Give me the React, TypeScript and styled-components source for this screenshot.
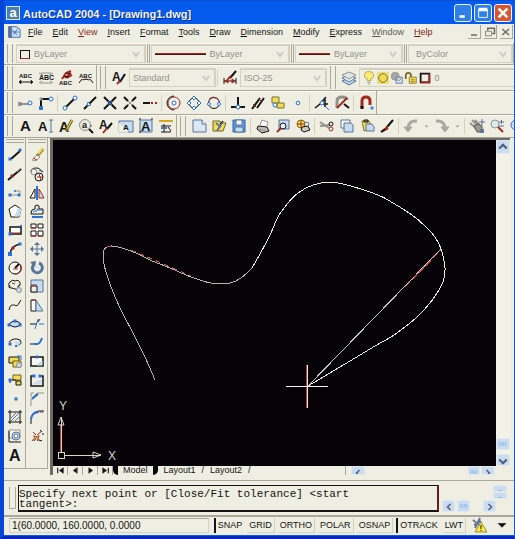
import React from "react";
import styled, { createGlobalStyle, css } from "styled-components";

const face = "#efeee2";
const shade = "#aca899";
const pale = "#d6d1bf";
const ink = "#141414";
const red = "#a32a20";
const blue = "#2c6fd6";
const steel = "#5a7398";
const gray = "#93928c";
const yellow = "#f2dc55";
const sky = "#c6dcf0";

const Global = createGlobalStyle`
  *, *::before, *::after { box-sizing: border-box; }
  body { margin: 0; background: ${face}; font-family: "Liberation Sans", Arial, sans-serif; font-size: 9px; color: ${ink}; }
  button, select { font: inherit; color: inherit; margin: 0; padding: 0; border: 0; background: none; }
  svg { display: block; }
`;

/* ---------- glyph data, drawn on a 16 x 16 grid ---------- */

type Stroke = [d: string, color: string, fill?: string, width?: number];
type Letter = { text: string; x: number; y: number; size: number; color: string };
type Shape = Stroke | Letter;

const ring = (x: number, y: number, r: number) =>
  `M${x - r} ${y}a${r} ${r} 0 1 0 ${2 * r} 0a${r} ${r} 0 1 0 ${-2 * r} 0`;
const dot = (x: number, y: number, s = 3) => `M${x - s / 2} ${y - s / 2}h${s}v${s}h${-s}z`;
const letter = (text: string, x: number, y: number, size: number, color = ink): Letter => ({ text, x, y, size, color });

const glyphs: Record<string, Shape[]> = {
  textSpread: [letter("ABC", 1, 8, 6), ["M1 12h14", ink, "none", 1], ["M1 12l2-2v4z M15 12l-2-2v4z", ink, ink, 0.5]],
  textFit: [["M1 3l4 2M15 3l-4 2M1 13l3-2M15 13l-3-2M3 3h10M2 13h12", gray], letter("ABC", 1, 10, 7)],
  textBrush: [["M4 9l4-6 5-2M7 8l6-5M9 8l5-3", red, "none", 2], ["M8 3l4 1M6 6l4 1", ink], letter("ABC", 1, 15, 6)],
  textArc: [letter("ABC", 1, 8, 6), ["M1 13l3-4M15 13l-3-4M5 10q3-2 6 0", ink], ["M3 10l2-1M11 9l2 1", red]],
  styleA: [letter("A", 1, 11, 12), ["M14 4l-5 8", ink, "none", 2], ["M9 11l-3 3", red, "none", 2]],
  dimStyle: [["M2 8v6M14 8v6M2 11h12", ink], ["M3 11l3-2v4zM13 11l-3-2v4z", red, red], ["M14 1l-6 7", ink, "none", 2], ["M9 6l-3 3", red, "none", 2]],
  layers: [["M1 11l7-3 7 3-7 4z", steel, sky], ["M1 8l7-3 7 3-7 4z", steel, "#e6eef4"], ["M1 5l7-3 7 3-7 4z", gray, "#dfe4e4"]],
  bulb: [["M8 1a4 4 0 0 1 2 8v2H6V9a4 4 0 0 1 2-8z", "#a59b50", "#fbee72"], ["M6 13h4M7 15h2", gray]],
  sun: [["M2 2h12v12H2z", "#e7d553", "#f8e97a"], [ring(8, 8, 5), "#6b6130", yellow]],
  frozen: [[ring(6, 6, 4.5), gray, "#a8a8a4"], ["M7 7h7v7H7z", steel, "#dfe8ee"], [ring(10, 9, 2), gray, sky]],
  lock: [["M2 9V5a3 3 0 0 1 6 0v2", "#77692a", "none", 2], ["M6 7h8v7H6z", "#8d7a23", yellow], ["M8 10h4M8 12h4", "#8d7a23"]],
  swatch: [["M3 3h10v10H3z", ink, face, 2], ["M13 3v10H3", red, "none", 2]],

  trackPoint: [["M1 9h10", gray, "none", 2], [dot(2, 9), gray, gray], [ring(12, 8, 2), blue, "#fff"]],
  fromPoint: [["M3 12V4h9", ink, "none", 2], [dot(3, 13), blue, blue], [dot(3, 4, 2), gray, gray], [ring(13, 4, 2), blue, "#fff"]],
  endpoint: [["M3 13L13 3", ink, "none", 2], [ring(3, 13, 2), blue, "#fff"], [ring(13, 3, 2), blue, "#fff"]],
  midpoint: [["M2 14L14 2", ink, "none", 2], ["M6 7l3 3-4 1z", blue, "#fff"]],
  intersect: [["M2 2l12 12M14 2L2 14", ink, "none", 2], ["M6 6l4 4M10 6l-4 4", blue]],
  apparent: [["M2 2l4 4M10 10l4 4M14 2l-4 4M6 10l-4 4", ink, "none", 2], ["M6 6l4 4M10 6l-4 4", gray]],
  extension: [["M1 8h7", ink, "none", 2], ["M9 8h2M13 8h2", red, "none", 2]],
  center: [[ring(8, 8, 6), red], [ring(8, 8, 2), blue, "#fff"], ["M8 1a7 7 0 0 0-7 7 7 7 0 0 0 7 7", ink]],
  quadrant: [[ring(8, 8, 5), ink], ["M8 1l2 2-2 2-2-2zM8 11l2 2-2 2-2-2zM3 6l2 2-2 2-2-2zM13 6l2 2-2 2-2-2z", blue, "#fff"]],
  tangent: [[ring(8, 8, 5.5), ink], ["M3 4l4-2 5 2", red], [ring(3, 9, 1.5), blue, "#fff"], [ring(13, 9, 1.5), blue, "#fff"]],
  perpendicular: [["M1 12h14M8 2v10", ink, "none", 2], [ring(8, 12, 2), blue, "#fff"]],
  parallel: [["M2 14L10 3M7 13l7-10", ink, "none", 2], ["M3 9l3 3M9 4l3 3", red]],
  insertSnap: [["M2 2h7v6H2z", "#7c7126", yellow], ["M7 8h7v5H7z", "#7c7126", yellow], [ring(5, 10, 2), blue, "#fff"]],
  nodeSnap: [[ring(8, 8, 1.8), blue, "#fff"]],
  nearest: [["M1 13l5-4 6-7M6 9h8M11 4v8", ink, "none", 1.5], [ring(8, 8, 2), blue, "#fff"], ["M12 12l3 3", blue]],
  noSnap: [["M3 13V6q0-4 5-4t5 3", gray, "none", 3], ["M13 3L3 13", red, "none", 2], ["M10 9l5 4", ink, "none", 2]],
  magnet: [["M4 13V6q0-4 4-4t4 4v4", red, "none", 3], ["M4 11v3", ink, "none", 3], ["M13 12h2v2h-2z", blue, sky]],

  textA: [letter("A", 2, 13, 15)],
  textCursor: [letter("A", 0, 13, 13), ["M13 2v12M11 2h4M11 14h4", steel]],
  textEdit: [letter("A", 1, 14, 14), ["M14 2L8 13", "#7c6a20", "none", 3], ["M14 2L9 11", yellow]],
  findText: [[ring(7, 7, 5.5), gray, "#e8e8e0"], letter("a", 4, 10, 9), ["M11 11l4 4", ink, "none", 2], ["M12 8h2", red]],
  stylePen: [letter("A", 1, 11, 12), ["M14 5l-5 6", ink, "none", 2], ["M9 10l-4 5", red, "none", 2]],
  scaleText: [["M1 3h14v11H1z", steel, sky, 1], ["M1 14V5l9 9z", face, face], letter("A", 5, 12, 8)],
  justify: [["M2 2h12v12H2z", steel, sky], ["M1 1h2M13 1h2M1 14h2", ink], letter("A", 3, 13, 13)],
  spaceText: [["M1 3h14", "#d2a61d", "none", 2], ["M6 6v8M3 8h10M3 14h10M10 9l3 4", ink], ["M3 10h6", steel, "none", 2]],

  sheet: [["M2 2h9l4 4v8H2z", steel, "#dce7f4"], ["M11 2v4h4", steel, "#fff"]],
  open: [["M2 3h7l1 2h5l-3 8H2z", "#6e6427", yellow], ["M5 5l5 4M12 3l-6 10", steel, "none", 2], ["M9 6l3-3", ink]],
  save: [["M2 2h12v12H2z", "#2d62a8", "#5f98dc"], ["M5 2h6v5H5z", steel, "#fff"], ["M4 9h8v5H4z", steel, sky]],
  print: [["M5 7l2-5 6 2-1 4", gray, "#fff"], ["M3 8l9 1 2 4-7 2-5-4z", ink, "#bcbcb6"], ["M4 11l7 2", gray]],
  preview: [["M4 2h10v9H4z", steel, sky], [ring(8, 8, 3), ink, "#e6eef4"], ["M6 10l-4 4", red, "none", 2]],
  publish: [[ring(6, 6, 4), "#8a6c16", yellow], ["M6 2v8M2 6h8", red], ["M7 9l6-1 2 4-6 2-3-2z", ink, "#c8c8c0"], ["M10 4l4 1-1 3", steel, "#fff"]],
  cut: [["M1 4l9 6M1 8l10-1", gray, "none", 2], [ring(12, 6, 2), ink], [ring(12, 11, 2), red]],
  copyClip: [["M2 2h9v8H2z", steel, "#fff"], ["M5 5h7l2 2v7H5z", steel, sky]],
  paste: [["M3 3h7l3 7-8 3z", "#8a741f", yellow], ["M5 2h4v2H5z", ink, gray], ["M7 6h6l2 3v4H7z", steel, sky]],
  match: [["M14 2L8 9", ink, "none", 2], ["M8 8l-5 6 6-3z", red, red], ["M2 14l4-3", ink, "none", 2]],
  undo: [["M14 3Q6 2 5 10", "#a9a8a2", "none", 3], ["M1 9h8l-4 5z", "#a9a8a2", "#a9a8a2"]],
  redo: [["M2 3q8-1 9 7", "#a9a8a2", "none", 3], ["M7 9h8l-4 5z", "#a9a8a2", "#a9a8a2"]],
  drop: [["M6 7h4l-2 2z", gray, gray, 0.5]],
  pan: [["M3 2l7 7M1 5l8 7M6 2l6 7", gray, "none", 2], ["M5 8l3 6h5V8l-4-2z", "#55554f", "#9a9a92"], ["M13 1v6M10 4h6", steel], [dot(13, 13), steel, steel]],
  zoomRt: [[ring(6, 6, 4), gray, "#dceaf2"], ["M9 9l5 5", red, "none", 2], ["M10 4h5M12.5 2v4M10 8h5", steel]],
  zoomWin: [[ring(7, 7, 5), steel, sky], ["M10 10l4 4", ink, "none", 2]],

  line: [["M4 12l9-8", ink, "none", 2], [dot(3, 12), blue, blue, 0], [dot(13, 3, 2), blue, blue]],
  xline: [["M1 14L14 3", ink, "none", 2], [dot(5, 10), red, red, 0], ["M10 6l4-4", gray]],
  pline: [["M4 10h7q3-1 2-4H9", gray], [dot(3, 10), blue, blue, 0], [dot(8, 6, 1), blue, blue], [dot(12, 10, 2), blue, blue]],
  polygon: [["M8 2l6 4-2 8H4L2 6z", ink, "#fff"], ["M11 6l3 0-2 7h-4z", sky, sky]],
  rectangle: [["M3 5h11v7H3z", ink, "#fff", 1.5], ["M4 11h9", red], [dot(3, 12), blue, blue, 0], [dot(14, 4, 2), blue, blue, 0]],
  arc: [["M3 13Q4 5 13 3", ink, "none", 1.5], [dot(3, 13, 4), blue, blue, 0], [dot(6, 7), red, red, 0], [dot(13, 3), blue, blue, 0]],
  circle: [[ring(8, 8, 6), ink, "#f7f7ef"], ["M8 8l4-4", ink, "none", 2], ["M6 9h5", red], ["M13 4a6 6 0 0 1-5 10", red]],
  cloud: [["M3 9Q0 6 3 4q2-3 5-1 4-2 5 2 1 3-2 3 1 4-3 3l-3-1q-5 0-2-3", ink], [ring(12, 12, 2.5), gray, sky], ["M5 5l3 1", red]],
  spline: [["M2 13q1-6 5-5 4 2 5-2l2-3", ink], ["M5 8h3", gray]],
  ellipse: [["M2 8q6-6 12 0-6 6-12 0z", ink, sky], [dot(2, 9), blue, blue, 0], [dot(8, 5), blue, blue, 0], [dot(13, 9), blue, blue, 0]],
  ellipseArc: [["M2 8q5-5 11-2 3 4-3 6", ink], [dot(3, 10), blue, blue, 0], ["M8 8h5l-2 4z", sky, sky], [dot(9, 12, 2), blue, blue, 0]],
  insertBlock: [["M2 4h10v6H2z", ink, yellow], ["M6 8h8v6H6z", "#6b6222", yellow], ["M10 3h4v4", blue], [ring(12, 12, 2.5), gray, sky]],
  makeBlock: [["M6 3h8v5H6z", "#6b6222", yellow], ["M9 9h5v4H9z", ink, yellow], ["M3 8h6M3 8v3", ink], [dot(3, 8), blue, blue, 0]],
  point: [[dot(9, 8, 3), blue, blue, 0]],
  hatch: [["M1 3h14M1 13h14M3 1v14M13 1v14", ink], ["M4 9l5-5M4 12l8-8M8 12l4-4", steel]],
  region: [["M2 2h11v8H2z", gray, "#f8f8f2"], [ring(9, 8, 4), steel, sky], ["M2 3v11h12", ink], [ring(9, 8, 2), steel, "#fff"]],
  mtext: [letter("A", 2, 14, 16)],

  erase: [["M14 2L8 9", "#8b6e1e", "none", 3], ["M14 1L9 7", yellow, "none", 2], ["M8 8l-5 5 4 1 4-4z", gray, "#f6f6f0"], ["M4 11l4 2", red]],
  copy: [["M2 6q0-4 5-4 5 0 4 3", ink], [ring(5, 6, 3), gray], [ring(10, 11, 4), ink], ["M8 11h6M10 8l2 6", red], ["M11 4l3 2", steel, "none", 2]],
  mirror: [["M6 4v9H1z", ink, "#fff"], ["M10 4v9h5z", red, sky], ["M8 1v14", blue, "none", 2]],
  offset: [["M2 10q0-4 4-4-1-4 2-4t2 4h4v5H2z", ink], ["M4 9q1-1 4-1 0-4 1-1h4", blue], ["M3 14h11", blue, "none", 2]],
  array: [["M2 2h5v4H2zM9 2h5v4H9zM2 9h5v5H2zM9 9h5v5H9z", ink, "#fff", 1], ["M2 6h5M9 14h5M2 14h5", red]],
  move: [["M8 2v12M2 8h12", steel], ["M8 1l3 3H5zM8 15l3-3H5zM1 8l3-3v6zM15 8l-3-3v6z", steel, steel, 0]],
  rotate: [["M10 3a5 5 0 1 1-5 1", steel, "none", 3], ["M1 2l6-1-1 6z", steel, steel, 0], [ring(8, 9, 2), sky, "#f8f8f2"]],
  scale: [["M2 2h12v12H2z", steel, sky], ["M2 8h6v6H2z", ink, face], ["M2 7h6", red]],
  stretch: [["M2 3h5v11H2z", ink, "#fff"], ["M7 3l7 11H7z", steel, sky], ["M3 3h3", red]],
  trim: [["M1 8h7", ink, "none", 1], ["M10 8h5", blue], ["M9 3L6 13", blue, "none", 1], ["M11 3l-2 3", ink]],
  extend: [["M1 10h8", ink, "none", 1], ["M5 10h3q3 0 5-6", blue, "none", 2]],
  breakAt: [["M2 4h12v9H2z", ink, "#f8f8f2", 1.5], ["M7 4h2", blue, "none", 3], ["M8 12l5-4v4z", sky, sky]],
  breakTwo: [["M6 4H2v10h12V4h-4", ink, "none", 1.5], [dot(5, 4), blue, blue, 0], [dot(11, 4), blue, blue, 0], ["M4 12h8V8z", sky, sky]],
  chamfer: [["M2 15V8l6-6h7", gray], ["M3 8l6-5", blue, "none", 2], ["M2 2h3M2 2v4", gray]],
  fillet: [["M2 15V9q1-6 8-7h5", ink], ["M2 10q1-7 8-7", blue, "none", 2], ["M11 3h3", red]],
  explode: [["M3 13l4-5 2 5 1-6M8 7l5-4M4 8l5 1M4 4l3 3", red], ["M11 2l2 2M13 6h2M5 13l3-4M10 12l3 1", ink], ["M6 9l3 2", "#dca73a", "none", 2]],

  drawing: [["M2 2h9l4 3v9H2z", "#2d62a8", "#dce7f4"], ["M2 2h3v12H2z", steel, steel], ["M6 5l6 7M12 4l-5 8M5 8h9", blue]],
  left: [["M10 4L6 8l4 4", "#4d6280", "none", 2]],
  right: [["M6 4l4 4-4 4", "#4d6280", "none", 2]],
  up: [["M3 10l5-5 5 5", "#4d6280", "none", 3]],
  down: [["M3 6l5 5 5-5", "#4d6280", "none", 3]],
  tiny: [["M6 8h4", steel, "none", 2]],
  thumb: [["M3 5v6M6 5v6M9 5v6M12 5v6", "#69a7e4"]],
  first: [["M3 3v10", ink, "none", 2], ["M13 3v10L6 8z", ink, ink]],
  prev: [["M11 3v10L4 8z", ink, ink], ["M10 4v8", red]],
  next: [["M5 3v10l7-5z", ink, ink]],
  last: [["M13 3v10", ink, "none", 2], ["M3 3v10l7-5z", ink, ink]],
  minimize: [["M4 12h6", "#fff", "none", 3]],
  maximize: [["M3 4h10v9H3z", "#fff"], ["M3 4h10", "#fff", "none", 4]],
  close: [["M3 3l10 10M13 3L3 13", "#fff", "none", 3]],
  docMin: [["M4 12h8", "#6d6b62", "none", 2]],
  docRestore: [["M5 6V3h9v7h-3", "#6d6b62", "none", 2], ["M2 7h8v6H2z", "#6d6b62"]],
  docClose: [["M3 4l9 8M12 4l-9 8", "#6d6b62", "none", 2]],
  tray: [["M2 3l6 5M9 1L4 11M3 8l7-4", steel, "none", 2], ["M3 4l4 4", gray, sky], ["M10 5l6 10H4z", "#a08b21", "#ffe84a"], ["M10 8v4M10 13v1", ink]],
  caret: [["M3 6h10l-5 5z", ink, ink]],
};

const Glyph = ({ name, size = 16 }: { name: string; size?: number }) => (
  <svg width={size} height={size} viewBox="0 0 16 16" aria-hidden="true">
    {glyphs[name].map((s, i) =>
      Array.isArray(s) ? (
        <path key={i} d={s[0]} stroke={s[1]} fill={s[2] ?? "none"} strokeWidth={s[3] ?? 1} />
      ) : (
        <text key={i} x={s.x} y={s.y} fontSize={s.size} fill={s.color} fontWeight="bold">{s.text}</text>
      )
    )}
  </svg>
);

/* ---------- window frame ---------- */

const Frame = styled.div`
  min-height: 100vh;
  display: flex;
  flex-direction: column;
  overflow: hidden;
  background: ${face};
  border-left: 4px solid #0646d6;
  border-right: 1px solid #0a5cf0;
  border-bottom: 3px solid #0628bd;
`;

const TitleBar = styled.header`
  display: flex;
  align-items: center;
  gap: 2px;
  height: 24px;
  padding: 0 2px;
  background: #055aee;
  border-top: 1px solid #0b4fd0;
`;

const Logo = styled.span`
  display: grid;
  place-items: center;
  width: 14px;
  height: 14px;
  margin-right: 1px;
  background: #4d7fae;
  border: 1px solid #dfe9f2;
  color: #fff;
  font-size: 13px;
  line-height: 10px;
  font-weight: bold;
`;

const Title = styled.h1`
  flex: 1;
  margin: 3px 0 0;
  color: #f4f4ee;
  font-size: 11px;
  line-height: 14px;
  font-weight: bold;
  text-shadow: 1px 1px 0 #0a2f92;
`;

const CaptionButton = styled.button<{ $danger?: boolean }>`
  display: grid;
  place-items: center;
  width: 18px;
  height: 18px;
  border: 1px solid #eef4ff;
  border-radius: 3px;
  background: ${(p) => (p.$danger ? "#d9572f" : "#2f80e6")};
`;

const MenuBar = styled.nav`
  display: flex;
  align-items: center;
  gap: 7px;
  height: 19px;
  padding: 0 1px 3px 3px;
`;

const MenuList = styled.div`
  display: flex;
  gap: 10px;
`;

const MenuItem = styled.button<{ $tone?: string }>`
  line-height: 12px;
  color: ${(p) => p.$tone ?? ink};
  &::first-letter { text-decoration: underline; }
`;

const DocButtons = styled.div`
  display: flex;
  gap: 3px;
  margin-left: auto;
`;

const DocButton = styled.button`
  display: grid;
  place-items: center;
  width: 13px;
  height: 14px;
  border: solid ${shade};
  border-width: 0 1px 1px 0;
`;

/* ---------- toolbars ---------- */

const Band = styled.div<{ $height: number }>`
  display: flex;
  flex: none;
  height: ${(p) => p.$height}px;
  overflow: hidden;
  border-bottom: 1px solid ${shade};
  box-shadow: inset 0 1px 0 #fbfaf3;
`;

const Group = styled.div<{ $grow?: number; $end?: boolean }>`
  display: flex;
  align-items: center;
  flex: ${(p) => (p.$grow ? `${p.$grow} 1 0` : "none")};
  min-width: 0;
  ${(p) => p.$end && css`border-right: 1px solid ${shade};`}
`;

const Grip = styled.span<{ $slim?: boolean }>`
  flex: none;
  align-self: stretch;
  width: ${(p) => (p.$slim ? 3 : 6)}px;
  margin: 1px ${(p) => (p.$slim ? 1 : 3)}px;
  border: solid ${shade};
  border-width: 0 1px;
`;

const Rule = styled.span`
  flex: none;
  width: 1px;
  height: 16px;
  margin: 0 2px 0 1px;
  background: ${pale};
`;

const Tool = styled.button<{ $width?: number }>`
  display: grid;
  place-items: center;
  flex: none;
  width: ${(p) => p.$width ?? 20}px;
  height: 18px;
`;

const Combo = styled.label<{ $width?: number; $inset?: boolean }>`
  display: flex;
  align-items: center;
  gap: 4px;
  flex: ${(p) => (p.$width ? "none" : "1")};
  width: ${(p) => (p.$width ? `${p.$width}px` : "auto")};
  height: 19px;
  min-width: 0;
  padding: 0 4px 0 ${(p) => (p.$inset ? 7 : 3)}px;
  border: solid ${pale};
  border-width: 2px 2px 1px 1px;
  color: ${gray};
`;

const Choice = styled.select`
  appearance: none;
  flex: 1;
  min-width: 0;
  outline: none;
`;

const Chevron = () => (
  <svg width="8" height="8" viewBox="0 0 8 8" aria-hidden="true">
    <path d="M1 2l3 4 3-4" fill="none" stroke="#c9cdc6" strokeWidth="2" />
  </svg>
);

const Swatch = styled.span`
  width: 10px;
  height: 9px;
  border: 1px solid ${ink};
  border-bottom-color: ${red};
`;

const LineSample = styled.span<{ $width: number }>`
  flex: none;
  width: ${(p) => p.$width}px;
  height: 2px;
  background: ${red};
  border-bottom: 1px solid #4a1512;
`;

const LayerState = styled.div`
  display: flex;
  align-items: center;
  flex: 1;
  height: 19px;
  padding-left: 2px;
  border: solid ${pale};
  border-width: 2px 0 1px 1px;
  color: ${gray};
`;

const Tools = ({ names, width }: { names: string[]; width?: number }) => (
  <>
    {names.map((n, i) =>
      n === "|" ? <Rule key={i} /> : (
        <Tool key={i} aria-label={n} $width={n === "drop" ? 11 : width}>
          <Glyph name={n} size={width ?? (n === "drop" ? 11 : 16)} />
        </Tool>
      )
    )}
  </>
);

/* ---------- work area ---------- */

const Work = styled.main`
  display: flex;
  flex: 1;
  min-height: 0;
`;

const Rail = styled.div`
  display: flex;
  flex-direction: column;
  flex: none;
  width: 22px;
  border-right: 1px solid ${shade};
  border-bottom: 1px solid ${shade};
  margin-bottom: 6px;
  padding-bottom: 4px;
`;

const RailGrip = styled.span`
  height: 4px;
  margin: 1px 1px 3px 2px;
  border: solid ${shade};
  border-width: 1px 0;
`;

const RailTools = styled.div`
  display: grid;
  flex: 1;
  grid-template-rows: repeat(17, minmax(0, 1fr));
  justify-items: center;
  align-items: center;
`;

const RailTool = styled.button`
  display: grid;
  place-items: center;
  width: 20px;
  height: 18px;
`;

const View = styled.section`
  display: grid;
  flex: 1;
  min-width: 0;
  grid-template-columns: minmax(0, 1fr) 14px;
  grid-template-rows: minmax(0, 1fr) 9px;
  margin: 0 4px 0 2px;
  border: solid #6d6c64;
  border-width: 2px 0 0 3px;
`;

const Sheet = styled.div`
  min-height: 0;
  background: #050307;
  overflow: hidden;
  svg { width: 100%; height: 100%; }
`;

const VScroll = styled.div`
  display: flex;
  flex-direction: column;
  background: #f3f2e9;
`;

const Thumb = styled.div`
  margin-bottom: 4px;
`;

const ScrollButton = styled.button<{ $w: number; $h: number }>`
  display: grid;
  place-items: center;
  flex: none;
  overflow: hidden;
  width: ${(p) => p.$w}px;
  height: ${(p) => p.$h}px;
  background: #cbdcee;
  border: 1px solid #dfe9f2;
  border-radius: 2px;
`;

const Spacer = styled.span`
  flex: 1;
`;

const TabRow = styled.div`
  display: flex;
  align-items: center;
  height: 9px;
  line-height: 9px;
`;

const NavButton = styled.button`
  display: grid;
  place-items: center;
  flex: none;
  width: 15px;
  height: 9px;
  border-right: 1px solid ${shade};
`;

const Tab = styled.button<{ $active?: boolean }>`
  flex: none;
  padding: 0 6px;
  line-height: 9px;
  ${(p) => p.$active && css`
    padding: 0 5px;
    border: solid #050307;
    border-width: 0 5px;
    border-radius: 0 0 5px 5px;
  `}
`;

const HScroll = styled.div`
  display: flex;
  gap: 1px;
  flex: none;
  width: 34%;
  margin-left: auto;
  padding: 0 1px 0 5px;
  border-left: 1px solid ${shade};
`;

/* ---------- command line and status ---------- */

const CommandArea = styled.section`
  display: flex;
  flex: none;
  margin-top: 5px;
  padding: 4px 3px 4px 5px;
  border-top: 1px solid ${shade};
  border-bottom: 2px solid ${shade};
  height: 37px;
`;

const CommandGrip = styled.span`
  flex: none;
  width: 7px;
  height: 22px;
  margin: 2px 2px 0 0;
  border: solid ${shade};
  border-width: 0 1px 1px 1px;
`;

const CommandText = styled.textarea`
  flex: 1;
  min-width: 0;
  height: 27px;
  margin: 0;
  padding: 3px 0 0;
  resize: none;
  overflow: hidden;
  outline: none;
  background: ${face};
  color: ${ink};
  border: 1px solid ${ink};
  border-right: 2px solid #6d201b;
  border-bottom-width: 2px;
  font-family: "Liberation Mono", "Courier New", monospace;
  font-size: 11px;
  line-height: 10px;
`;

const CommandScroll = styled.div`
  display: flex;
  flex-direction: column;
  align-items: flex-end;
  flex: none;
  width: 72px;
  padding: 0 4px 0 3px;
`;

const ScrollLine = styled.div`
  display: flex;
  gap: 2px;
  width: 100%;
  margin-top: 1px;
`;

const StatusBar = styled.footer`
  display: flex;
  align-items: center;
  flex: none;
  gap: 3px;
  height: 19px;
  padding: 0 2px 2px 5px;
  border-bottom: 1px solid #0a5cf0;
  line-height: 14px;
`;

const Coordinates = styled.output`
  flex: 1;
  min-width: 0;
  height: 15px;
  margin-right: 2px;
  padding-left: 2px;
  border: 1px solid ${pale};
  border-top-color: ${shade};
  font-size: 10px;
  white-space: nowrap;
`;

const Toggle = styled.button<{ $on?: boolean }>`
  flex: none;
  height: 15px;
  padding: 0 2px;
  border: solid ${pale};
  border-width: 0 1px 1px 0;
  ${(p) => p.$on && css`border-color: ${ink} ${pale} ${pale} ${ink}; border-width: 0 0 0 2px;`}
`;

/* ---------- drawing ---------- */

const curvePoints: [number, number][] = [
  [155, 380], [145, 357], [133, 333], [120, 308], [110, 284], [104, 264], [104, 250], [112, 246],
  [131, 251], [150, 260], [170, 268], [191, 277], [211, 283], [230, 283], [241, 278], [252, 268],
  [260, 254], [270, 235], [278, 217], [288, 203], [298, 193], [313, 185], [330, 182], [347, 185],
  [378, 195], [393, 203], [412, 215], [425, 226], [435, 237], [441, 249], [445, 268], [443, 282],
  [437, 293], [430, 303], [416, 318], [394, 335], [375, 346], [345, 364], [308, 386],
];

/* Catmull-Rom spline through the points, written as cubic segments. */
const smooth = (pts: [number, number][]) =>
  pts.slice(1).reduce((d, p, i) => {
    const a = pts[Math.max(0, i - 1)];
    const b = pts[i];
    const n = pts[Math.min(pts.length - 1, i + 2)];
    return `${d}C${b[0] + (p[0] - a[0]) / 6} ${b[1] + (p[1] - a[1]) / 6} ${p[0] - (n[0] - b[0]) / 6} ${p[1] - (n[1] - b[1]) / 6} ${p[0]} ${p[1]}`;
  }, `M${pts[0][0]} ${pts[0][1]}`);

const Drawing = () => (
  <svg viewBox="53 140 443 326" preserveAspectRatio="xMinYMin meet" fill="none" role="img" aria-label="Spline">
    <g shapeRendering="crispEdges">
      <path d={smooth(curvePoints.slice(0, 16))} stroke="#b5b4a8" />
      <path d={smooth(curvePoints.slice(15))} stroke="#ecebdf" />
      <path d="M107 247L112 246M131 250L191 276" stroke="#b4574c" strokeDasharray="5 4" />
      <path d="M308 386L441 249" stroke="#c4c8cc" />
      <path d="M405 287L441 250" stroke="#d0453a" strokeDasharray="7 3" />
      <path d="M306.5 365v43" stroke="#d0342b" />
      <path d="M307.5 365v43M286 386.5h42" stroke="#f4f2e8" />
      <path d="M60.5 452V424" stroke="#c9392f" />
      <path d="M61.5 452V417M65 455.5h36" stroke="#d9d7ca" />
      <path d="M58.5 452.5h6v6h-6z" stroke="#d9d7ca" />
    </g>
    <path d="M58 425l3-8 3 8zM93 452l8 3-8 3z" stroke="#d9d7ca" />
    <g fill="#d5d4c8" fontSize="12" fontFamily="Liberation Sans, Arial, sans-serif">
      <text x="59" y="410">Y</text>
      <text x="108" y="460">X</text>
    </g>
  </svg>
);

const menus: [string, string?][] = [
  ["File"], ["Edit"], ["View", "#8b1c18"], ["Insert"], ["Format"], ["Tools"], ["Draw"], ["Dimension"],
  ["Modify"], ["Express"], ["Window", "#5d5c56"], ["Help", "#7d1a16"],
];

const drawTools = ["line", "xline", "pline", "polygon", "rectangle", "arc", "circle", "cloud", "spline", "ellipse", "ellipseArc", "insertBlock", "makeBlock", "point", "hatch", "region", "mtext"];
const modifyTools = ["erase", "copy", "mirror", "offset", "array", "move", "rotate", "scale", "stretch", "trim", "extend", "breakAt", "breakTwo", "chamfer", "fillet", "explode"];
const modes: [string, boolean][] = [["SNAP", true], ["GRID", false], ["ORTHO", false], ["POLAR", false], ["OSNAP", false], ["OTRACK", true], ["LWT", false]];

const ToolRail = ({ names }: { names: string[] }) => (
  <Rail>
    <RailGrip />
    <RailTools>
      {names.map((n) => <RailTool key={n} aria-label={n}><Glyph name={n} /></RailTool>)}
    </RailTools>
  </Rail>
);

export default function App() {
  return (
    <>
      <Global />
      <Frame>
        <TitleBar>
          <Logo>a</Logo>
          <Title>AutoCAD 2004 - [Drawing1.dwg]</Title>
          <CaptionButton aria-label="Minimize"><Glyph name="minimize" size={14} /></CaptionButton>
          <CaptionButton aria-label="Maximize"><Glyph name="maximize" size={14} /></CaptionButton>
          <CaptionButton aria-label="Close" $danger><Glyph name="close" size={14} /></CaptionButton>
        </TitleBar>
        <MenuBar>
          <Glyph name="drawing" size={14} />
          <MenuList>
            {menus.map(([label, tone]) => <MenuItem key={label} $tone={tone}>{label}</MenuItem>)}
          </MenuList>
          <DocButtons>
            <DocButton aria-label="Minimize drawing"><Glyph name="docMin" size={12} /></DocButton>
            <DocButton aria-label="Restore drawing"><Glyph name="docRestore" size={12} /></DocButton>
            <DocButton aria-label="Close drawing"><Glyph name="docClose" size={12} /></DocButton>
          </DocButtons>
        </MenuBar>

        <Band $height={22}>
          <Group $grow={139}>
            <Grip />
            <Combo><Swatch /><Choice aria-label="Color"><option>ByLayer</option></Choice><Chevron /></Combo>
          </Group>
          <Group $grow={142}>
            <Grip $slim />
            <Combo><LineSample $width={51} /><Choice aria-label="Linetype"><option>ByLayer</option></Choice><Chevron /></Combo>
          </Group>
          <Group $grow={111}>
            <Grip $slim />
            <Combo><LineSample $width={31} /><Choice aria-label="Lineweight"><option>ByLayer</option></Choice><Chevron /></Combo>
          </Group>
          <Group $grow={108} $end>
            <Grip $slim />
            <Combo $inset><Choice aria-label="Plot style"><option>ByColor</option></Choice><Chevron /></Combo>
          </Group>
        </Band>

        <Band $height={26}>
          <Group $end><Grip /><Tools names={["textSpread", "textFit", "textBrush", "textArc"]} /></Group>
          <Group>
            <Grip /><Tools names={["styleA"]} />
            <Combo $width={87}><Choice aria-label="Text style"><option>Standard</option></Choice><Chevron /></Combo>
            <Rule />
            <Tools names={["dimStyle"]} />
            <Combo $width={87}><Choice aria-label="Dimension style"><option>ISO-25</option></Choice><Chevron /></Combo>
          </Group>
          <Group $grow={1}>
            <Grip /><Tools names={["layers"]} />
            <LayerState><Tools names={["bulb", "sun", "frozen", "lock", "swatch"]} width={14} />&nbsp;0</LayerState>
          </Group>
        </Band>

        <Band $height={24}>
          <Group $end>
            <Grip />
            <Tools names={["trackPoint", "fromPoint", "|", "endpoint", "midpoint", "intersect", "apparent", "extension", "|", "center", "quadrant", "tangent", "|", "perpendicular", "parallel", "insertSnap", "nodeSnap", "|", "nearest", "noSnap", "|", "magnet"]} />
          </Group>
        </Band>

        <Band $height={23}>
          <Group $end>
            <Grip />
            <Tools names={["textA", "textCursor", "textEdit", "findText", "stylePen", "scaleText", "justify", "spaceText"]} />
          </Group>
          <Group>
            <Grip />
            <Tools names={["sheet", "open", "save", "|", "print", "preview", "publish", "|", "cut", "copyClip", "paste", "match", "|", "undo", "drop", "redo", "drop", "|", "pan", "zoomRt", "zoomWin"]} />
          </Group>
        </Band>

        <Work>
          <ToolRail names={drawTools} />
          <ToolRail names={modifyTools} />
          <View>
            <Sheet><Drawing /></Sheet>
            <VScroll>
              <ScrollButton $w={14} $h={14} aria-label="Scroll up"><Glyph name="up" size={12} /></ScrollButton>
              <Spacer />
              <Thumb>
                <ScrollButton $w={14} $h={12} aria-label="Vertical position"><Glyph name="thumb" size={10} /></ScrollButton>
              </Thumb>
              <ScrollButton $w={14} $h={12} aria-label="Scroll down"><Glyph name="down" size={12} /></ScrollButton>
            </VScroll>
            <TabRow>
              {["first", "prev", "next", "last"].map((n) => (
                <NavButton key={n} aria-label={`${n} tab`}><Glyph name={n} size={9} /></NavButton>
              ))}
              <Tab $active>Model</Tab>
              <Tab>Layout1</Tab>/
              <Tab>Layout2</Tab>/
              <HScroll>
                <ScrollButton $w={14} $h={9} aria-label="Scroll left"><Glyph name="left" size={12} /></ScrollButton>
                <Spacer />
                <ScrollButton $w={12} $h={9} aria-label="Horizontal position"><Glyph name="thumb" size={10} /></ScrollButton>
                <ScrollButton $w={14} $h={9} aria-label="Scroll right"><Glyph name="right" size={12} /></ScrollButton>
              </HScroll>
            </TabRow>
          </View>
        </Work>

        <CommandArea>
          <CommandGrip />
          <CommandText aria-label="Command line" readOnly value={"Specify next point or [Close/Fit tolerance] <start\ntangent>:"} />
          <CommandScroll>
            <ScrollButton $w={14} $h={7} aria-label="Previous command"><Glyph name="tiny" size={10} /></ScrollButton>
            <ScrollButton $w={14} $h={7} aria-label="Next command"><Glyph name="tiny" size={10} /></ScrollButton>
            <ScrollLine>
              <ScrollButton $w={13} $h={12} aria-label="Scroll command left"><Glyph name="left" size={12} /></ScrollButton>
              <ScrollButton $w={13} $h={12} aria-label="Command position"><Glyph name="thumb" size={10} /></ScrollButton>
              <Spacer />
              <ScrollButton $w={13} $h={12} aria-label="Scroll command right"><Glyph name="right" size={12} /></ScrollButton>
              <Spacer />
            </ScrollLine>
          </CommandScroll>
        </CommandArea>

        <StatusBar>
          <Coordinates>1(60.0000, 160.0000, 0.0000</Coordinates>
          {modes.map(([label, on]) => <Toggle key={label} $on={on} aria-pressed={on}>{label}</Toggle>)}
          <Tool aria-label="Notifications"><Glyph name="tray" /></Tool>
          <Tool aria-label="Status menu"><Glyph name="caret" size={12} /></Tool>
        </StatusBar>
      </Frame>
    </>
  );
}
